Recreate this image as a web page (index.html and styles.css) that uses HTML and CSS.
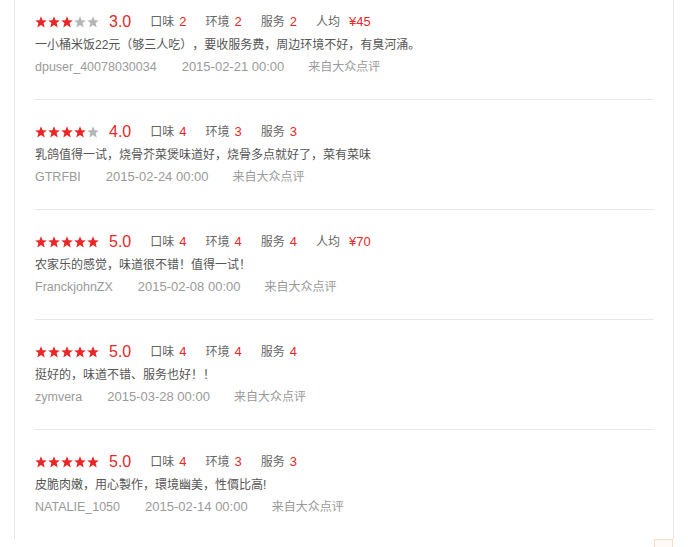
FILE: index.html
```html
<!DOCTYPE html>
<html>
<head>
  <meta charset="utf-8">
  <title>评价</title>
  <link rel="stylesheet" href="styles.css">
</head>
<body>
  <svg width="0" height="0" class="defs">
    <symbol id="star" viewBox="0 0 12 12">
      <polygon points="6,0.3 7.6,4.2 11.8,4.5 8.6,7.1 9.7,11.4 6,9 2.3,11.4 3.4,7.1 0.2,4.5 4.4,4.2"/>
    </symbol>
  </svg>

  <div class="reviews">
    <div class="review">
      <div class="head">
        <span class="stars"><svg class="on"><use href="#star"/></svg><svg class="on"><use href="#star"/></svg><svg class="on"><use href="#star"/></svg><svg><use href="#star"/></svg><svg><use href="#star"/></svg></span>
        <b class="score">3.0</b>
        <span class="tag">口味<em>2</em></span>
        <span class="tag">环境<em>2</em></span>
        <span class="tag">服务<em>2</em></span>
        <span class="tag">人均<em class="price">¥45</em></span>
      </div>
      <p class="text">一小桶米饭22元（够三人吃），要收服务费，周边环境不好，有臭河涌。</p>
      <div class="meta"><span class="user">dpuser_40078030034</span><span class="date">2015-02-21 00:00</span><span class="src">来自大众点评</span></div>
    </div>

    <div class="review">
      <div class="head">
        <span class="stars"><svg class="on"><use href="#star"/></svg><svg class="on"><use href="#star"/></svg><svg class="on"><use href="#star"/></svg><svg class="on"><use href="#star"/></svg><svg><use href="#star"/></svg></span>
        <b class="score">4.0</b>
        <span class="tag">口味<em>4</em></span>
        <span class="tag">环境<em>3</em></span>
        <span class="tag">服务<em>3</em></span>
      </div>
      <p class="text">乳鸽值得一试，烧骨芥菜煲味道好，烧骨多点就好了，菜有菜味</p>
      <div class="meta"><span class="user">GTRFBI</span><span class="date">2015-02-24 00:00</span><span class="src">来自大众点评</span></div>
    </div>

    <div class="review">
      <div class="head">
        <span class="stars"><svg class="on"><use href="#star"/></svg><svg class="on"><use href="#star"/></svg><svg class="on"><use href="#star"/></svg><svg class="on"><use href="#star"/></svg><svg class="on"><use href="#star"/></svg></span>
        <b class="score">5.0</b>
        <span class="tag">口味<em>4</em></span>
        <span class="tag">环境<em>4</em></span>
        <span class="tag">服务<em>4</em></span>
        <span class="tag">人均<em class="price">¥70</em></span>
      </div>
      <p class="text">农家乐的感觉，味道很不错！值得一试！</p>
      <div class="meta"><span class="user">FranckjohnZX</span><span class="date">2015-02-08 00:00</span><span class="src">来自大众点评</span></div>
    </div>

    <div class="review">
      <div class="head">
        <span class="stars"><svg class="on"><use href="#star"/></svg><svg class="on"><use href="#star"/></svg><svg class="on"><use href="#star"/></svg><svg class="on"><use href="#star"/></svg><svg class="on"><use href="#star"/></svg></span>
        <b class="score">5.0</b>
        <span class="tag">口味<em>4</em></span>
        <span class="tag">环境<em>4</em></span>
        <span class="tag">服务<em>4</em></span>
      </div>
      <p class="text">挺好的，味道不错、服务也好！！</p>
      <div class="meta"><span class="user">zymvera</span><span class="date">2015-03-28 00:00</span><span class="src">来自大众点评</span></div>
    </div>

    <div class="review">
      <div class="head">
        <span class="stars"><svg class="on"><use href="#star"/></svg><svg class="on"><use href="#star"/></svg><svg class="on"><use href="#star"/></svg><svg class="on"><use href="#star"/></svg><svg class="on"><use href="#star"/></svg></span>
        <b class="score">5.0</b>
        <span class="tag">口味<em>4</em></span>
        <span class="tag">环境<em>3</em></span>
        <span class="tag">服务<em>3</em></span>
      </div>
      <p class="text">皮脆肉嫩，用心製作，環境幽美，性價比高!</p>
      <div class="meta"><span class="user">NATALIE_1050</span><span class="date">2015-02-14 00:00</span><span class="src">来自大众点评</span></div>
    </div>
  </div>

  <a class="to-top" href="#"></a>
</body>
</html>
```

FILE: styles.css
```css
body {
  margin: 0;
  background: #fff;
  font-family: 'Liberation Sans', 'Noto Sans CJK SC', sans-serif;
  font-size: 12px;
  color: #666;
  text-spacing-trim: space-all;
}

.defs {
  position: absolute;
}

/* the list is scrolled a little, first row is cut at the top */
.reviews {
  margin: -10px 14px 0;
  padding: 0 19px 0 20px;
  border-left: 1px solid #e6e6e6;
  border-right: 1px solid #e6e6e6;
}

.review {
  padding: 20px 0 21px;
  border-bottom: 1px solid #e8e8e8;
}
.review:last-child {
  border-bottom: 0;
}

.head, .text, .meta {
  height: 22px;
  line-height: 22px;
  margin: 0;
}
.head {
  height: 24px;
  display: flex;
  align-items: center;
}

.stars {
  display: flex;
  gap: 1px;
  margin-right: 10px;
}
.stars svg {
  width: 12px;
  height: 12px;
  fill: #b5b5b5;
}
.stars svg.on {
  fill: #ea2626;
}

.score {
  font-weight: normal;
  font-size: 16px;
  color: #e8282a;
  margin-right: 19px;
}

.tag {
  margin-right: 19px;
  color: #666;
}
.tag em {
  font-style: normal;
  font-size: 13px;
  color: #e8282a;
  margin-left: 5px;
}
.tag em.price {
  margin-left: 9px;
}

.text {
  color: #555;
}

.meta {
  color: #9a9a9a;
}
.meta .user {
  font-size: 12.5px;
  margin-right: 25px;
}
.meta .date {
  font-size: 13px;
  margin-right: 24px;
}

.to-top {
  position: fixed;
  left: 654px;
  top: 539px;
  width: 17px;
  height: 30px;
  border: 1px solid #f6dcc4;
  background: #fffaf5;
}
```
